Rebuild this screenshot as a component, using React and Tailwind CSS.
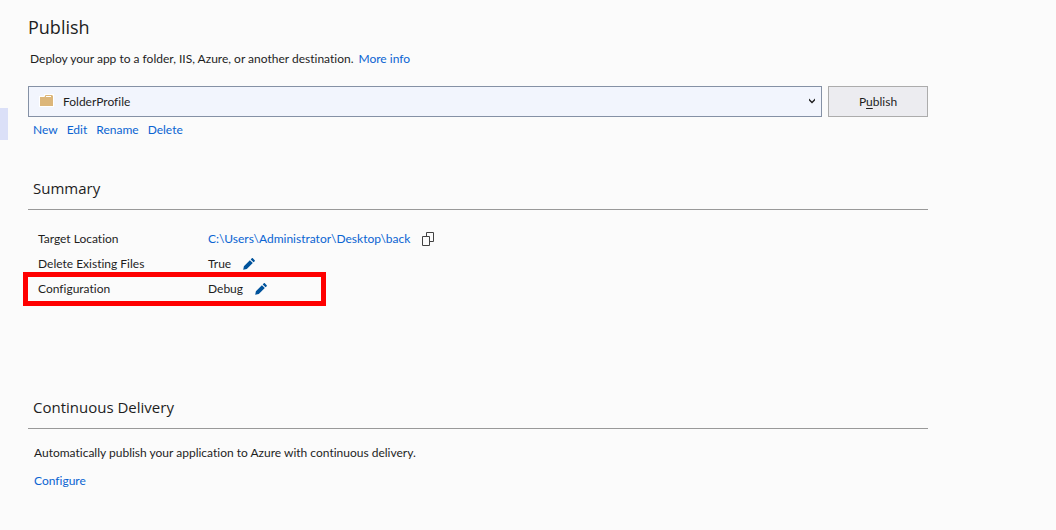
import React from "react";

function FolderIcon({ className }) {
  return (
    <svg viewBox="0 0 16 14" className={className} aria-hidden="true">
      <path d="M0 2h5V0h10v13H0z" fill="#ffffff" />
      <path d="M1 3h4.5L6.5 1H13l1 1v10H1z" fill="#dcb67a" />
      <path d="M7 2h5v1H7z" fill="#ffffff" />
    </svg>
  );
}

function PencilIcon() {
  return (
    <svg viewBox="0 0 12 12" className="size-3" aria-hidden="true">
      <path
        d="M0.2 11.8 0.9 8.2 6.9 2.2 9.8 5.1 3.8 11.1ZM7.7 1.4 8.8 0.3C9.1 0 9.5 0 9.8 0.3L11.7 2.2C12 2.5 12 2.9 11.7 3.2L10.6 4.3Z"
        fill="#00539c"
      />
    </svg>
  );
}

function CopyIcon() {
  return (
    <svg viewBox="0 0 12 14" className="h-3.5 w-3" fill="none" stroke="#424242" aria-hidden="true">
      <path d="M0.5 4.5h7v9h-7zM4.5 4V0.5h7v9H8" />
    </svg>
  );
}

function Link({ children }) {
  return (
    <a href="#" className="text-[#0a64d2] hover:underline">
      {children}
    </a>
  );
}

function SectionTitle({ children }) {
  return (
    <h2 className="border-b border-[#999999] pb-2.5 pl-[5px] font-['Open_Sans','Noto_Sans',sans-serif] text-[15px] leading-[22px]">
      {children}
    </h2>
  );
}

function Row({ label, highlighted, children }) {
  return (
    <div className="relative flex h-[25px] items-center pl-2.5">
      <dt className="w-[170px]">{label}</dt>
      <dd className="flex items-center gap-3">{children}</dd>
      {highlighted && (
        <span className="pointer-events-none absolute -top-1 -left-[5px] h-[34px] w-[303px] border-5 border-[#ff0000]" />
      )}
    </div>
  );
}

export default function App() {
  return (
    <div className="flex min-h-screen bg-[#fbfbfb] font-[Lato,'Open_Sans',sans-serif] text-xs text-[#1e1e1e] [font-variant-ligatures:none]">
      <aside className="w-2 shrink-0 pt-[108px]">
        <div className="h-8 bg-[#dbe0f8]" />
      </aside>
      <main className="max-w-[920px] grow pt-4 pl-5">
        <h1 className="font-['Open_Sans','Noto_Sans',sans-serif] text-lg leading-[22px]">Publish</h1>
        <p className="mt-[11px] flex gap-[5px] pl-0.5 leading-5">
          <span>Deploy your app to a folder, IIS, Azure, or another destination.</span>
          <Link>More info</Link>
        </p>

        <div className="mt-[17px] flex gap-1.5">
          <div className="relative grow">
            <select
              aria-label="Publish profile"
              className="h-[31px] w-full appearance-none border border-[#8591a5] bg-[#f2f5fd] pl-[34px] text-[#1e1e1e]"
            >
              <option>FolderProfile</option>
            </select>
            <FolderIcon className="pointer-events-none absolute top-2 left-[11px] h-3.5 w-4" />
            <svg
              viewBox="0 0 6 6"
              className="pointer-events-none absolute top-3 right-[7px] size-1.5"
              aria-hidden="true"
            >
              <path d="M0 0.5 3 3.5 6 0.5V2.5L3 5.5 0 2.5Z" fill="#1e1e1e" />
            </svg>
          </div>
          <button type="button" className="h-[31px] w-[100px] border border-[#acacac] bg-[#ececf0]">
            P<span className="underline underline-offset-2">u</span>blish
          </button>
        </div>

        <nav className="mt-1 flex gap-[9px] pl-[5px] leading-[18px]">
          <Link>New</Link>
          <Link>Edit</Link>
          <Link>Rename</Link>
          <Link>Delete</Link>
        </nav>

        <section className="mt-[38px]">
          <SectionTitle>Summary</SectionTitle>
          <dl className="mt-4">
            <Row label="Target Location">
              <Link>C:\Users\Administrator\Desktop\back</Link>
              <button type="button" aria-label="Copy target location">
                <CopyIcon />
              </button>
            </Row>
            <Row label="Delete Existing Files">
              True
              <button type="button" aria-label="Edit delete existing files">
                <PencilIcon />
              </button>
            </Row>
            <Row label="Configuration" highlighted>
              Debug
              <button type="button" aria-label="Edit configuration">
                <PencilIcon />
              </button>
            </Row>
          </dl>
        </section>

        <section className="mt-[95px]">
          <SectionTitle>Continuous Delivery</SectionTitle>
          <div className="mt-3.5 flex flex-col items-start gap-2 pl-1.5 leading-5">
            <p>Automatically publish your application to Azure with continuous delivery.</p>
            <Link>Configure</Link>
          </div>
        </section>
      </main>
    </div>
  );
}
